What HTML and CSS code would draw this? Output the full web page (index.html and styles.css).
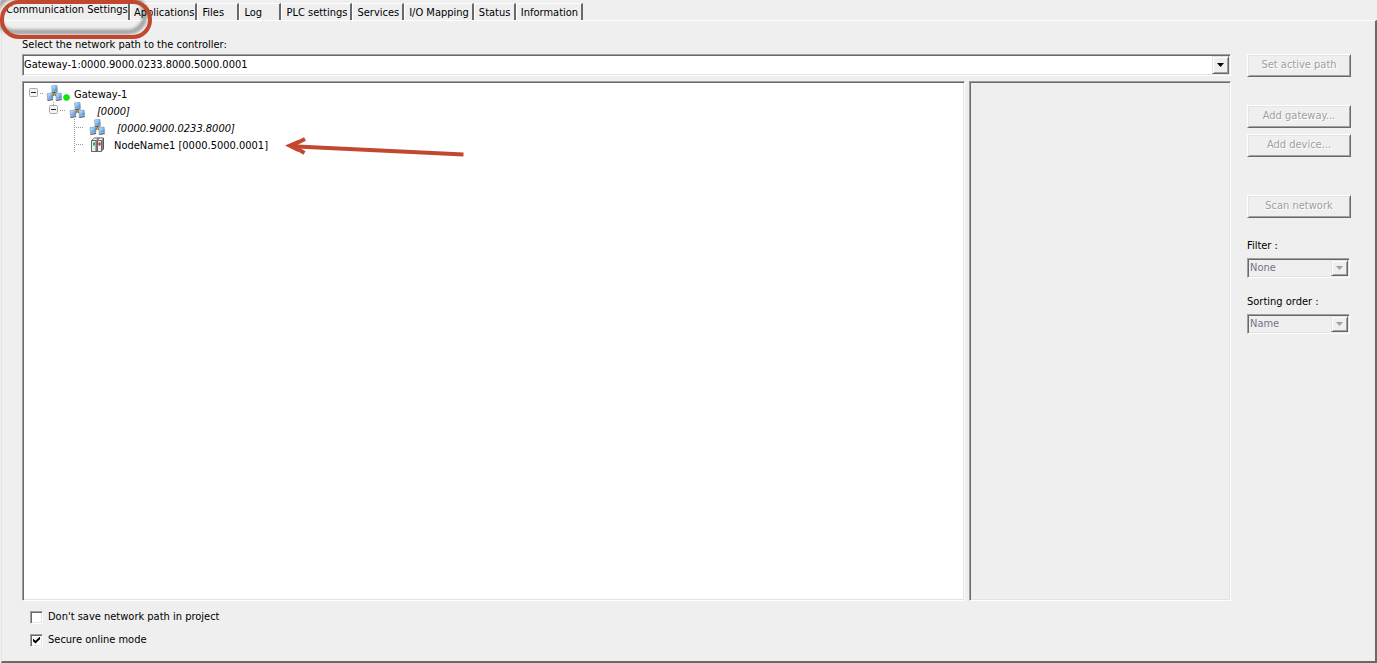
FILE: index.html
```html
<!DOCTYPE html>
<html lang="en">
<head>
<meta charset="utf-8">
<title>Communication Settings</title>
<link rel="stylesheet" href="styles.css">
</head>
<body>
<svg class="defs" aria-hidden="true">
  <defs>
    <linearGradient id="screen" x1="0" y1="0" x2="1" y2="1">
      <stop offset="0" stop-color="#d8effd"/><stop offset=".5" stop-color="#86bdf0"/><stop offset="1" stop-color="#2f74cc"/>
    </linearGradient>
    <g id="pc">
      <path d="M1 .6L6.400 0l.6 5.200-5.400.8z" fill="url(#screen)" stroke="#6f8fb5" stroke-width=".6"/>
      <path d="M.6 6.400l6-.6.800 1.200-5.400 1z" fill="#46546a"/>
      <path d="M1 6.500l5-.5" stroke="#cfd6de" stroke-width=".6"/>
    </g>
    <g id="network">
      <path d="M8.500 6v4M4 12l4.500-3 4 3" stroke="#39382f" stroke-width="1.600" fill="none"/>
      <use href="#pc" x="4.500" y="0.300"/>
      <use href="#pc" x="0" y="8"/>
      <use href="#pc" x="8.700" y="8"/>
      <path d="M7.300 8.400h2.400l-.5 2.400H7.700z" fill="#e0a81c"/>
    </g>
    <g id="minus">
      <rect x=".5" y=".5" width="8" height="8" rx="1" fill="#f4f4f4" stroke="#a9a9a9"/>
      <path d="M2 4.500h5" stroke="#222"/>
    </g>
  </defs>
</svg>
<nav class="tabs" role="tablist">
  <button class="tab tab-active" role="tab" aria-selected="true">Communication Settings</button>
  <button class="tab tab-tight" role="tab">Applications</button>
  <button class="tab" role="tab">Files</button>
  <button class="tab" role="tab">Log</button>
  <button class="tab" role="tab">PLC settings</button>
  <button class="tab" role="tab">Services</button>
  <button class="tab" role="tab">I/O Mapping</button>
  <button class="tab" role="tab">Status</button>
  <button class="tab" role="tab">Information</button>
</nav>
<main class="page">
  <section class="main">
    <label class="path-label" for="path">Select the network path to the controller:</label>
    <div class="combo combo-path">
      <select id="path"><option>Gateway-1:0000.9000.0233.8000.5000.0001</option></select>
      <span class="arrow-btn"><svg width="7" height="4"><path d="M0 0h7L3.5 4z" fill="#000"/></svg></span>
    </div>
    <div class="panes">
      <div class="tree" role="tree">
        <div class="row" role="treeitem">
          <svg width="22" height="17"><use href="#minus" x="5" y="3"/><path d="M16 8.500h4" class="dots"/></svg>
          <svg width="28" height="17"><use href="#network"/><circle cx="20.500" cy="12.500" r="3" fill="#00f000" stroke="#2bb52b" stroke-width=".6"/></svg>
          <span>Gateway-1</span>
        </div>
        <div class="row" role="treeitem">
          <svg width="45" height="17"><path d="M29.500 0v3M36 8.500h5" class="dots"/><use href="#minus" x="25" y="3"/></svg>
          <svg width="28" height="17"><use href="#network"/></svg>
          <span class="italic">[0000]</span>
        </div>
        <div class="row" role="treeitem">
          <svg width="65" height="17"><path d="M50.500 0v17M52 8.500h7" class="dots"/></svg>
          <svg width="28" height="17"><use href="#network"/></svg>
          <span class="italic">[0000.9000.0233.8000]</span>
        </div>
        <div class="row" role="treeitem">
          <svg width="65" height="17"><path d="M50.500 1v16M52 8.500h8" class="dots"/></svg>
          <svg width="25" height="17">
            <path d="M2.500 4.500l3-2.500h9v11l-2.500 2.500h-9.500z" fill="#8a8a8a" stroke="#555"/>
            <path d="M3.500 4l2-1.500h3L7 4zM9 4l2-1.500h3L12.500 4z" fill="#fff"/>
            <path d="M2.500 4.500h4.500v11H2.500zM8.500 4.500h4v11h-4z" fill="#ededed" stroke="#666"/>
            <path d="M4 6.500h2v3H4z" fill="#10c030"/><path d="M9.500 6.500h2v3h-2z" fill="#e01818"/>
          </svg>
          <span>NodeName1 [0000.5000.0001]</span>
        </div>
        <svg class="pointer" width="182" height="24" aria-hidden="true">
          <path d="M178.500 17.500L12 9.500" stroke="#c1482f" stroke-width="4"/>
          <path d="M20 2L7 8.500l12.500 7.500" stroke="#c1482f" stroke-width="4" fill="none"/>
          <path d="M0 8.500L13 3v12z" fill="#c1482f"/>
        </svg>
      </div>
      <div class="details"></div>
    </div>
    <div class="options">
      <label><input type="checkbox">Don't save network path in project</label>
      <label><input type="checkbox" checked>Secure online mode</label>
    </div>
  </section>
  <aside class="side">
    <button class="btn" disabled>Set active path</button>
    <button class="btn btn-gateway" disabled>Add gateway...</button>
    <button class="btn btn-device" disabled>Add device...</button>
    <button class="btn btn-scan" disabled>Scan network</button>
    <label class="side-label" for="filter">Filter :</label>
    <div class="combo combo-side">
      <select id="filter" disabled><option>None</option></select>
      <span class="arrow-btn"><svg width="7" height="4"><path d="M0 0h7L3.5 4z" fill="#a0a0a0"/></svg></span>
    </div>
    <label class="side-label" for="sort">Sorting order :</label>
    <div class="combo combo-side">
      <select id="sort" disabled><option>Name</option></select>
      <span class="arrow-btn"><svg width="7" height="4"><path d="M0 0h7L3.5 4z" fill="#a0a0a0"/></svg></span>
    </div>
  </aside>
</main>
<svg class="ring" width="156" height="44" aria-hidden="true">
  <defs><filter id="soft" x="-10%" y="-20%" width="120%" height="140%"><feGaussianBlur stdDeviation="1.500"/></filter></defs>
  <rect x="-3" y="-3" width="148" height="35" rx="17" fill="none" stroke="#000" stroke-opacity=".32" stroke-width="5" filter="url(#soft)"/>
  <rect x="2" y="2" width="148" height="35" rx="17" fill="none" stroke="#c1482f" stroke-width="4"/>
</svg>
</body>
</html>
```
FILE: styles.css
```css
* { box-sizing: border-box; }
body {
  margin: 0;
  height: 100vh;
  display: flex;
  flex-direction: column;
  background: #efefef;
  color: #000;
  font: 11px/14px "DejaVu Sans Condensed", "Noto Sans", sans-serif;
}
button, select, input { font: inherit; color: inherit; margin: 0; }
svg { display: block; flex: none; }
.defs { position: absolute; width: 0; height: 0; }
.ring { position: absolute; left: 0; top: 0; pointer-events: none; }

.tabs { display: flex; align-items: flex-end; height: 20px; }
.tab {
  height: 17px;
  min-width: 42px;
  padding: 1px 3px 0 4px;
  text-align: left;
  white-space: nowrap;
  background: #efefef;
  border: 0;
  border-top: 1px solid #fff;
  border-left: 1px solid #fff;
  border-right: 2px solid #696969;
}
.tab-active { width: 130px; height: 20px; padding: 0 0 0 5px; border-top: 0; }
.tab-tight { padding-left: 3px; padding-right: 1px; }

.page {
  flex: 1;
  display: grid;
  grid-template-columns: minmax(0, 1fr) 104px;
  column-gap: 16px;
  margin-left: 1px;
  padding: 17px 24px 14px 20px;
  border: solid;
  border-width: 1px 2px 2px 1px;
  border-color: #fff #696969 #696969 #e3e3e3;
}
.main { display: flex; flex-direction: column; }
.path-label { height: 16px; }

.combo, .tree, .details {
  border: 1px solid;
  border-color: #a0a0a0 #fff #fff #a0a0a0;
  box-shadow: inset 1px 1px #696969, inset -1px -1px #e3e3e3;
}
.combo { display: flex; padding: 1px; background: #fff; }
.combo select { flex: 1; min-width: 0; padding: 0; border: 0; border-radius: 0; appearance: none; background: none; opacity: 1; }
.combo-path { height: 22px; }
.combo-side { height: 20px; width: 103px; background: #efefef; }
.combo-side select { color: #74748a; padding-left: 1px; }
.arrow-btn {
  display: grid;
  place-items: center;
  width: 17px;
  pointer-events: none;
  background: #efefef;
  border: 1px solid;
  border-color: #e3e3e3 #696969 #696969 #e3e3e3;
  box-shadow: inset 1px 1px #fff, inset -1px -1px #a0a0a0;
}

.panes { flex: 1; display: flex; gap: 4px; margin-top: 5px; }
.tree { position: relative; flex: 1; padding: 3px 1px; background: #fff; }
.details { width: 262px; }
.row { display: flex; height: 17px; line-height: 17px; white-space: nowrap; }
.row span { padding-top: 1px; }
.italic { font-style: italic; }
.dots { stroke: #999; stroke-dasharray: 1 1; fill: none; }
.pointer { position: absolute; left: 262px; top: 55px; }

.options { display: flex; flex-direction: column; gap: 9px; padding: 9px 0 0 8px; }
.options label { display: flex; align-items: center; gap: 5px; }
.options input {
  width: 13px;
  height: 13px;
  appearance: none;
  background: #fff;
  border: 1px solid;
  border-color: #a0a0a0 #fff #fff #a0a0a0;
  box-shadow: inset 1px 1px #696969, inset -1px -1px #e3e3e3;
}
.options input:checked::before {
  content: "";
  display: block;
  width: 7px;
  height: 7px;
  margin: 2px;
  background: #000;
  clip-path: polygon(0 29%, 35% 62%, 100% 0, 100% 40%, 35% 100%, 0 68%);
}

.side { display: flex; flex-direction: column; padding-top: 16px; }
.btn {
  height: 23px;
  padding: 0 0 1px;
  background: #efefef;
  color: #a0a0a0;
  text-shadow: 1px 1px #fff;
  border: 1px solid;
  border-color: #fff #696969 #696969 #fff;
  box-shadow: inset 1px 1px #e3e3e3, inset -1px -1px #a0a0a0;
}
.btn-gateway { margin-top: 28px; }
.btn-device { margin-top: 6px; }
.btn-scan { margin-top: 38px; }
.side-label { margin: 21px 0 5px; }
.combo-side + .side-label { margin-top: 17px; }
```
